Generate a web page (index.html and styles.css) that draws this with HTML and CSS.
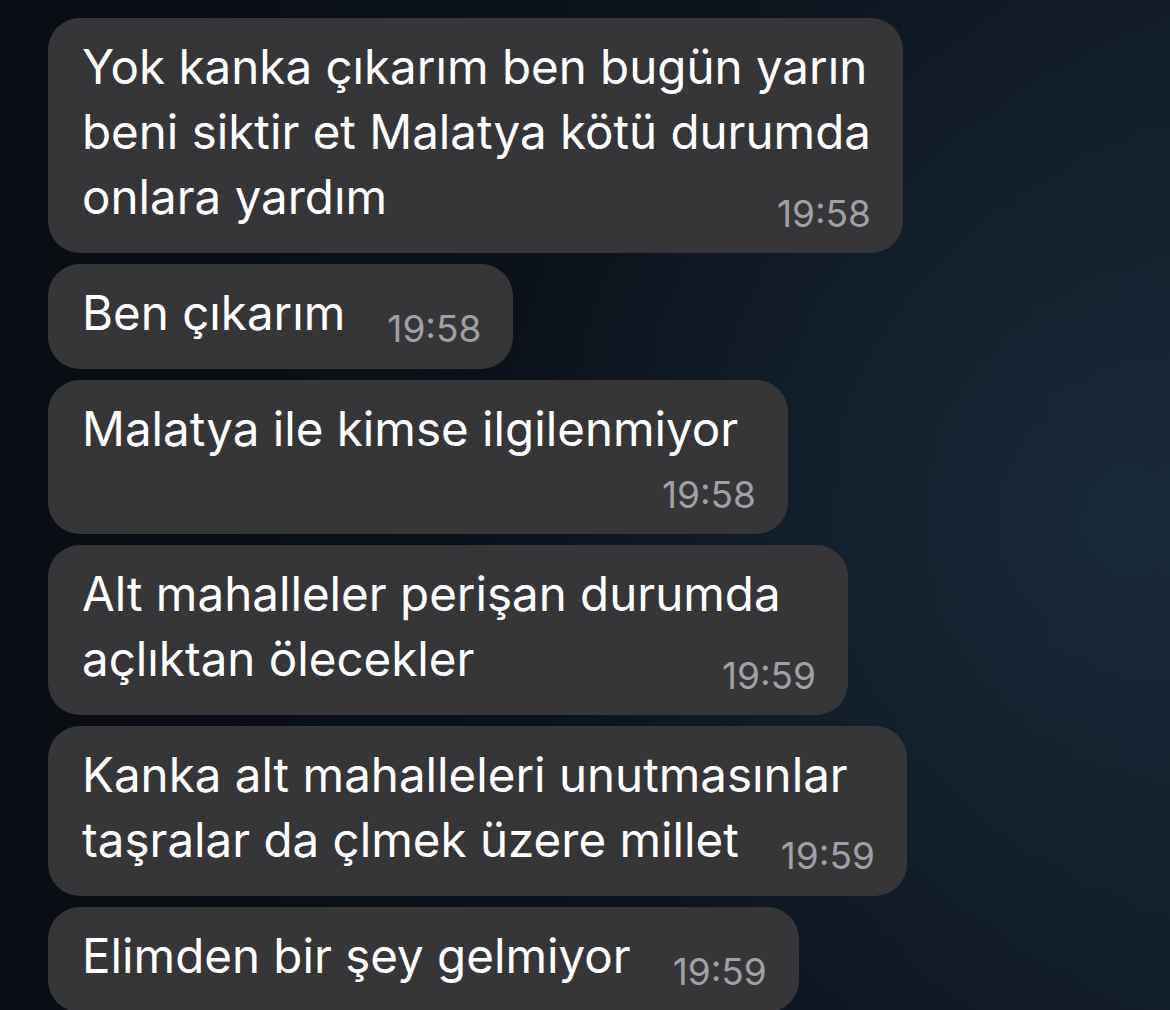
FILE: index.html
```html
<!DOCTYPE html>
<html lang="tr">
<head>
<meta charset="utf-8">
<title>Sohbet</title>
<link rel="stylesheet" href="styles.css">
</head>
<body>
<main class="chat">
  <div class="bubble">
    <p class="text">Yok kanka çıkarım ben bugün yarın<br>beni siktir et Malatya kötü durumda<br>onlara yardım<span class="time float">19:58</span></p>
  </div>
  <div class="bubble">
    <p class="text">Ben çıkarım<span class="time inline">19:58</span></p>
  </div>
  <div class="bubble bubble--w740">
    <p class="text">Malatya ile kimse ilgilenmiyor</p>
    <span class="time block">19:58</span>
  </div>
  <div class="bubble bubble--w800">
    <p class="text">Alt mahalleler perişan durumda<br>açlıktan ölecekler<span class="time float">19:59</span></p>
  </div>
  <div class="bubble">
    <p class="text">Kanka alt mahalleleri unutmasınlar<br>taşralar da çlmek üzere millet<span class="time inline">19:59</span></p>
  </div>
  <div class="bubble">
    <p class="text">Elimden bir şey gelmiyor<span class="time inline">19:59</span></p>
  </div>
</main>
</body>
</html>
```
FILE: styles.css
```css
html, body {
  margin: 0;
  height: 100%;
}
body {
  background-color: #0c131c;
  background-image:
    radial-gradient(ellipse 650px 620px at 1130px 520px, rgba(28, 48, 66, 0.7), rgba(28, 48, 66, 0) 100%),
    linear-gradient(90deg, #090d14 0%, #0b121b 50%, #101a25 100%);
  font-family: Inter, "Noto Sans", sans-serif;
  color: #ffffff;
  overflow: hidden;
}
.chat {
  display: flex;
  flex-direction: column;
  align-items: flex-start;
  gap: 11px;
  padding: 18px 0 0 48px;
}
.bubble {
  background: #363638;
  border-radius: 32px;
  padding: 16px 32px 24px 34px;
  display: flex;
  flex-direction: column;
  box-sizing: border-box;
}
.bubble--w740 {
  min-width: 740px;
}
.bubble--w800 {
  min-width: 800px;
}
.text {
  margin: 0;
  font-size: 47.5px;
  line-height: 65px;
  white-space: nowrap;
}
.time {
  font-size: 37px;
  line-height: 30px;
  color: #a0a0a5;
}
.time.inline {
  display: inline-block;
  margin-left: 42px;
  vertical-align: -12px;
}
.time.float {
  display: inline-block;
  float: right;
  margin-left: 42px;
  margin-top: 35px;
}
.time.block {
  align-self: flex-end;
  margin-top: 19px;
}
```
